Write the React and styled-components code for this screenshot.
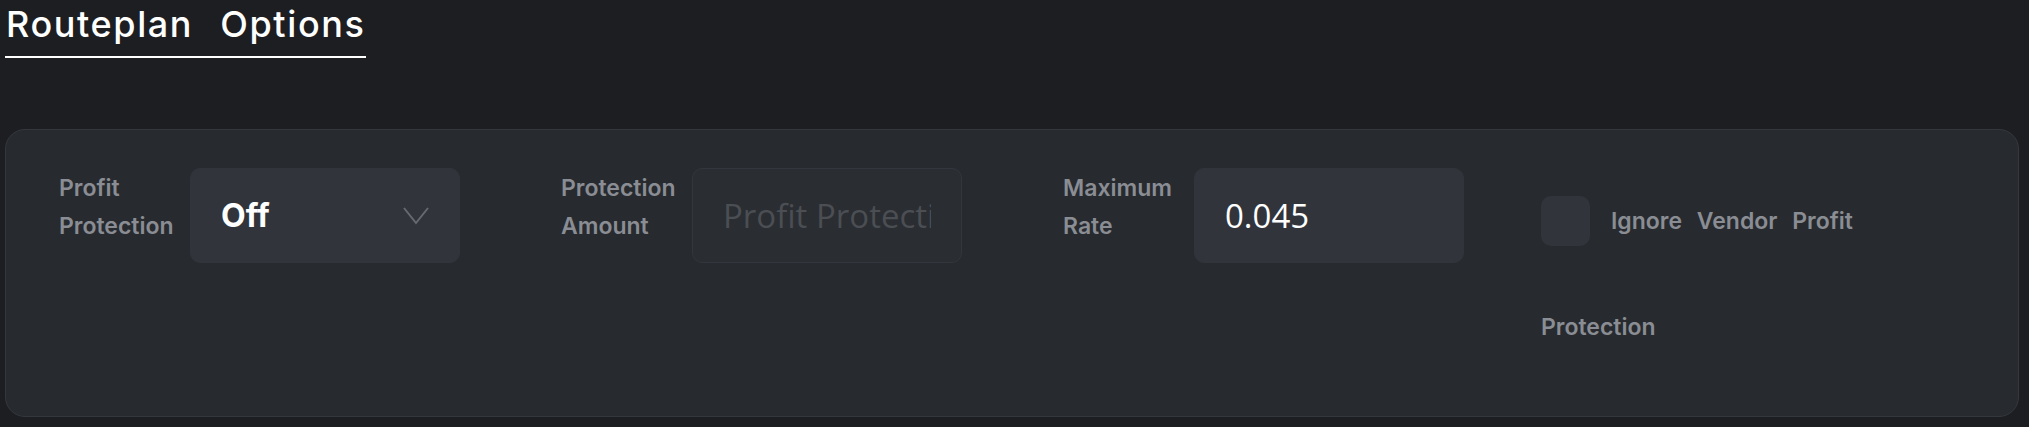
import React from "react";
import styled, { createGlobalStyle } from "styled-components";

const GlobalStyle = createGlobalStyle`
  html, body {
    margin: 0;
    background: #1d1e22;
  }
  * {
    box-sizing: border-box;
  }
`;

const Page = styled.div`
  padding: 0 10px 10px 5px;
  font-family: Inter, Lato, "Noto Sans", sans-serif;
`;

const Title = styled.h1`
  display: inline-block;
  margin: 0;
  padding: 0 1px 8px 1px;
  font-size: 36px;
  font-weight: 500;
  line-height: 48px;
  letter-spacing: 1.6px;
  word-spacing: 16px;
  color: #ffffff;
  border-bottom: 2px solid #ffffff;
`;

const Panel = styled.section`
  margin-top: 71px;
  height: 288px;
  padding: 38px 53px;
  background: #272a2f;
  border: 1px solid #34383e;
  border-radius: 20px;
`;

const Row = styled.div`
  display: grid;
  grid-template-columns: 502px 502px 478px auto;
  align-items: start;
`;

const Field = styled.div`
  display: flex;
  align-items: flex-start;
  gap: 13px;
`;

const Label = styled.label`
  width: 118px;
  margin-top: 1px;
  font-size: 23px;
  font-weight: 600;
  line-height: 38px;
  color: #8a8d93;
`;

const Control = styled.div`
  display: flex;
  align-items: center;
  width: 270px;
  height: 95px;
  padding: 0 30px;
  border-radius: 10px;
  background: ${({ $disabled }) => ($disabled ? "#2a2d32" : "#31343b")};
  border: 1px solid ${({ $disabled }) => ($disabled ? "#33373d" : "#31343b")};
`;

const SelectValue = styled.span`
  flex: 1;
  font-size: 32px;
  font-weight: 700;
  color: #ffffff;
`;

const InputText = styled.span`
  flex: 1;
  overflow: hidden;
  white-space: nowrap;
  font-family: "Open Sans", "Noto Sans", sans-serif;
  font-size: 33px;
  color: ${({ $placeholder }) => ($placeholder ? "#4b4e53" : "#ffffff")};
`;

const Chevron = styled.svg`
  width: 26px;
  height: 18px;
  flex: none;
`;

const CheckGroup = styled.div`
  padding-top: 28px;
`;

const CheckRow = styled.div`
  display: flex;
  align-items: center;
  gap: 21px;
`;

const Box = styled.span`
  width: 49px;
  height: 50px;
  border-radius: 10px;
  background: #31343b;
`;

const CheckText = styled.span`
  font-size: 23px;
  font-weight: 600;
  color: #8a8d93;
  word-spacing: 9px;
`;

const Wrapped = styled(CheckText)`
  display: block;
  margin-top: 67px;
`;

export default function App() {
  return (
    <Page>
      <GlobalStyle />
      <Title>Routeplan Options</Title>
      <Panel>
        <Row>
          <Field>
            <Label>Profit Protection</Label>
            <Control>
              <SelectValue>Off</SelectValue>
              <Chevron viewBox="0 0 26 18" fill="none">
                <path d="M1 1 L13 16 L25 1" stroke="#66696f" strokeWidth="2" />
              </Chevron>
            </Control>
          </Field>
          <Field>
            <Label>Protection Amount</Label>
            <Control $disabled>
              <InputText $placeholder>Profit Protection Amount</InputText>
            </Control>
          </Field>
          <Field>
            <Label>Maximum Rate</Label>
            <Control>
              <InputText>0.045</InputText>
            </Control>
          </Field>
          <CheckGroup>
            <CheckRow>
              <Box />
              <CheckText>Ignore Vendor Profit</CheckText>
            </CheckRow>
            <Wrapped>Protection</Wrapped>
          </CheckGroup>
        </Row>
      </Panel>
    </Page>
  );
}
